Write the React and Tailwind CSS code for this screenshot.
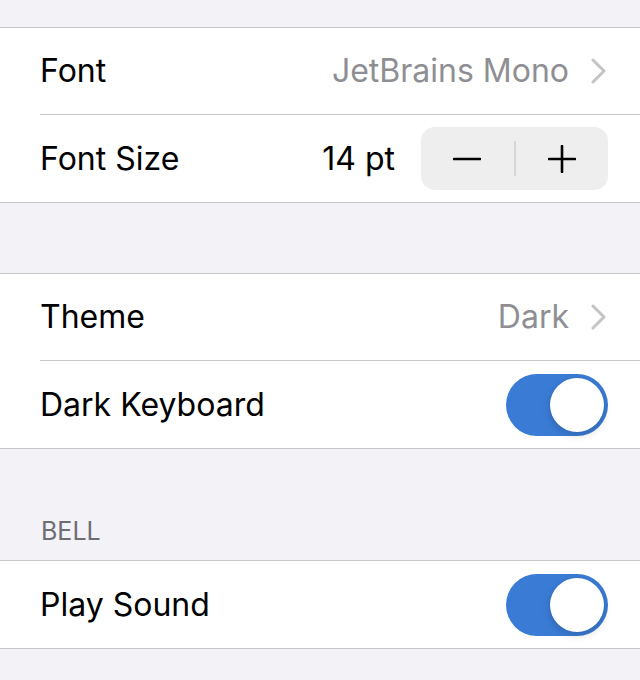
function Toggle() {
  return (
    <div className="flex h-[62px] w-[102px] items-center justify-end rounded-full bg-[#3a7bd5] p-[4px]">
      <div className="h-[54px] w-[54px] rounded-full bg-white shadow-[0_3px_8px_rgba(0,0,0,0.18)]" />
    </div>
  )
}

function Row({ label, children, last }) {
  return (
    <div className="pl-[40px]">
      <div className={`flex h-[87px] items-center justify-between pr-[32px] ${last ? '' : 'border-b border-[#c6c6c8]'}`}>
        <span className="text-[32px] text-black">{label}</span>
        {children}
      </div>
    </div>
  )
}

function Value({ text }) {
  return (
    <div className="flex items-center gap-[22px]">
      <span className="text-[32px] text-[#8e8e93]">{text}</span>
      <svg width="15" height="26" viewBox="0 0 15 26" className="mr-[2px]">
        <path d="M2 2l11 11L2 24" fill="none" stroke="#c4c4c7" strokeWidth="3" strokeLinecap="round" strokeLinejoin="round" />
      </svg>
    </div>
  )
}

function Group({ children }) {
  return <div className="border-y border-[#c6c6c8] bg-white">{children}</div>
}

export default function App() {
  return (
    <div className="h-[680px] overflow-hidden bg-[#f2f2f7] pt-[27px] font-['Inter',sans-serif]">
      <Group>
        <Row label="Font">
          <Value text="JetBrains Mono" />
        </Row>
        <Row label="Font Size" last>
          <div className="flex items-center gap-[26px]">
            <span className="text-[32px] text-black">14 pt</span>
            <div className="flex h-[63px] w-[187px] items-center rounded-[14px] bg-[#eeeeef]">
              <button className="flex flex-1 items-center justify-center">
                <svg width="28" height="28" viewBox="0 0 28 28"><path d="M1 14h26" stroke="#000" strokeWidth="2.6" strokeLinecap="round" /></svg>
              </button>
              <div className="h-[35px] w-[2px] bg-[#d6d6d8]" />
              <button className="flex flex-1 items-center justify-center">
                <svg width="28" height="28" viewBox="0 0 28 28"><path d="M1 14h26M14 1v26" stroke="#000" strokeWidth="2.6" strokeLinecap="round" /></svg>
              </button>
            </div>
          </div>
        </Row>
      </Group>

      <div className="h-[70px]" />

      <Group>
        <Row label="Theme">
          <Value text="Dark" />
        </Row>
        <Row label="Dark Keyboard" last>
          <Toggle />
        </Row>
      </Group>

      <div className="flex h-[111px] items-end pb-[10px] pl-[41px]">
        <span className="text-[25px] uppercase text-[#6d6d72]">Bell</span>
      </div>

      <Group>
        <Row label="Play Sound" last>
          <Toggle />
        </Row>
      </Group>
    </div>
  )
}
